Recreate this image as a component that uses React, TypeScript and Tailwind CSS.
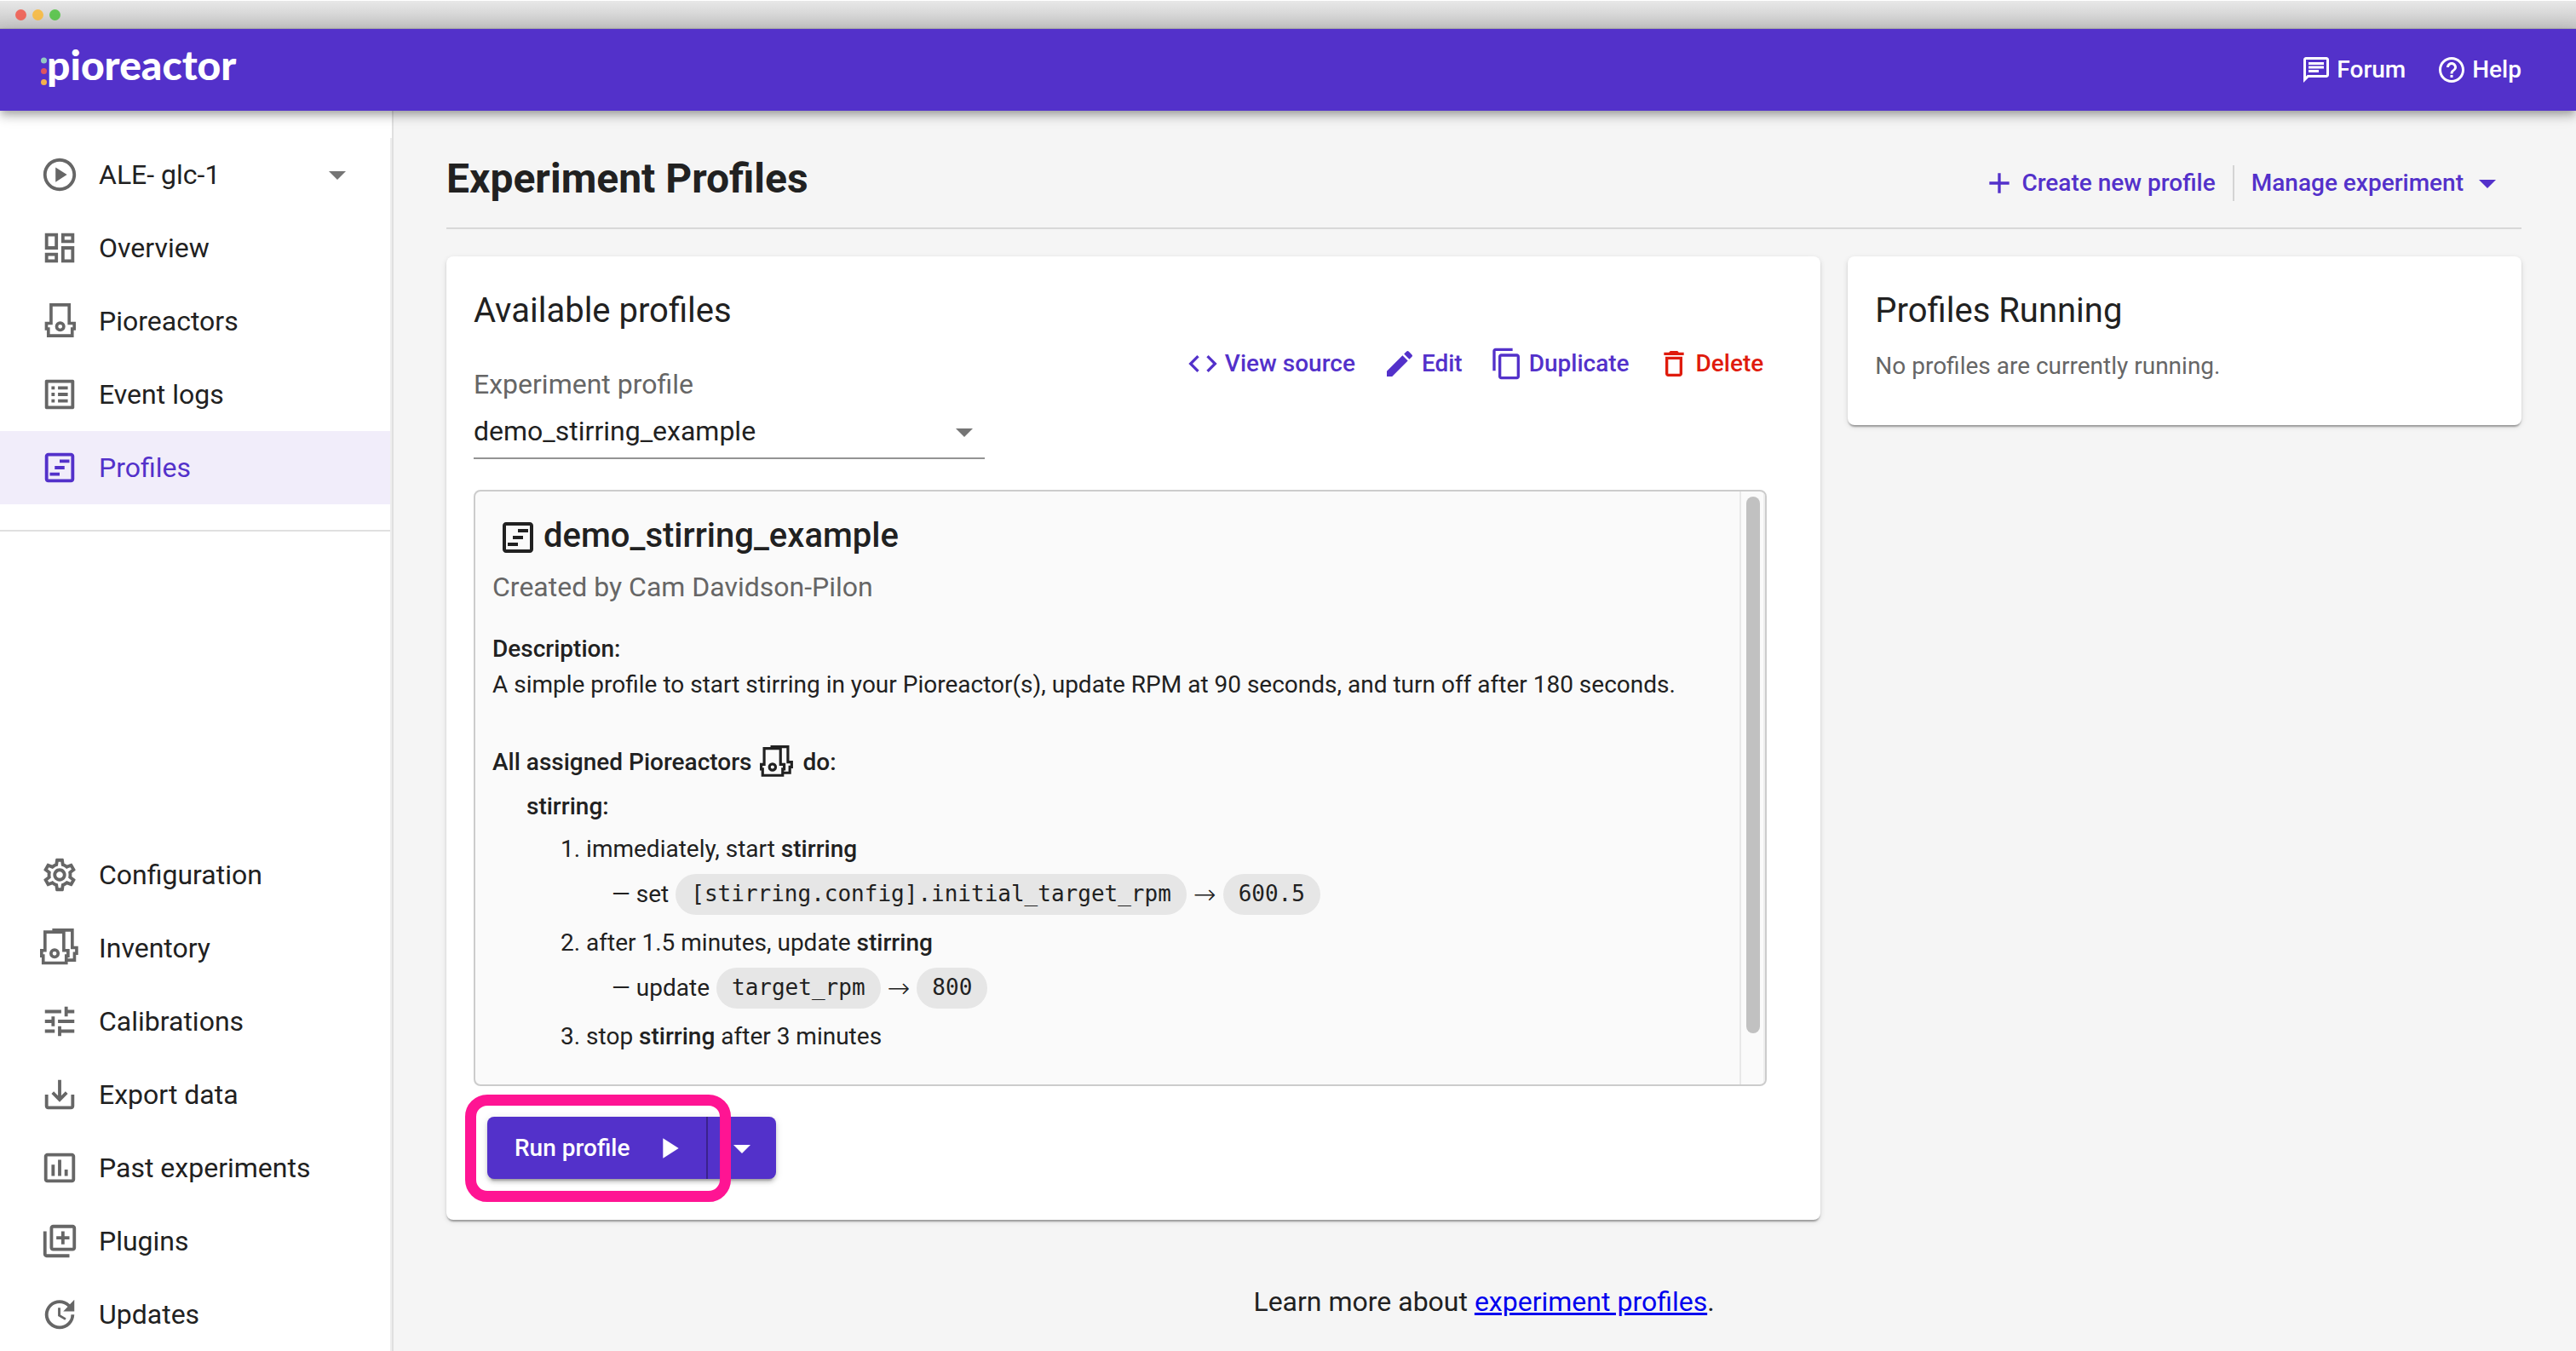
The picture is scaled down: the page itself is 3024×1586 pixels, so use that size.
import { useState } from "react";
import type { ComponentType, ReactNode } from "react";
import {
  MdAdd,
  MdArrowDropDown,
  MdCode,
  MdContentCopy,
  MdDeleteOutline,
  MdEdit,
  MdHelpOutline,
  MdInsertChartOutlined,
  MdOutlineChat,
  MdOutlineDashboard,
  MdOutlineLibraryAdd,
  MdOutlineListAlt,
  MdOutlinePlayCircle,
  MdOutlineSettings,
  MdOutlineViewTimeline,
  MdPlayArrow,
  MdSaveAlt,
  MdTune,
  MdUpdate,
} from "react-icons/md";

type IconType = ComponentType<{ className?: string }>;

function PioreactorIcon({ className }: { className?: string }) {
  return (
    <svg viewBox="0 0 24 24" className={className} fill="none" stroke="currentColor" strokeWidth="1.9" aria-hidden="true">
      <path d="M6.75 2H17.85V13.3H20.95V16.7H19.7V20.95H5.1V16.7H3.9V13.3H6.75Z" />
      <circle cx="12.35" cy="15.3" r="2.2" />
    </svg>
  );
}

function PioreactorsIcon({ className }: { className?: string }) {
  return (
    <svg viewBox="0 0 24 24" className={className} fill="none" stroke="currentColor" strokeWidth="1.9" aria-hidden="true">
      <path d="M3.05 2.15H14.55V13.45H17.15V16.75H16.05V21.15H1.95V16.75H.95V13.45H3.05Z" />
      <circle cx="8.9" cy="15.3" r="2.2" />
      <path d="M7.5 .95H19.75V11.75H22.4V15.25H21.1V19.35H16.3" />
    </svg>
  );
}

function NavItem({ icon: Icon, label, active = false }: { icon: IconType; label: string; active?: boolean }) {
  return (
    <li>
      <a
        href="#"
        aria-current={active ? "page" : undefined}
        className={
          active
            ? "flex h-[86px] items-center gap-[23px] bg-[#f1edfa] pl-[47px] text-[#5331ca]"
            : "flex h-[86px] items-center gap-[23px] pl-[47px]"
        }
      >
        <Icon className={active ? "size-[46px] shrink-0" : "size-[46px] shrink-0 text-[#666666]"} />
        <span>{label}</span>
      </a>
    </li>
  );
}

function Sidebar() {
  return (
    <aside className="flex w-[462px] shrink-0 flex-col border-r-2 border-[#e0e0e0] bg-white pt-8">
      <nav className="flex grow flex-col justify-between border-r-2 border-[#eeeeee]" aria-label="Main">
        <div>
          <button type="button" className="flex h-[86px] w-full items-center gap-[23px] pr-[38px] pl-[47px] text-left">
            <MdOutlinePlayCircle className="size-[46px] shrink-0 text-[#666666]" />
            <span className="grow">ALE- glc-1</span>
            <MdArrowDropDown className="size-12 text-[#757575]" />
          </button>
          <ul className="border-b-2 border-[#e0e0e0] pb-[30px]">
            <NavItem icon={MdOutlineDashboard} label="Overview" />
            <NavItem icon={PioreactorIcon} label="Pioreactors" />
            <NavItem icon={MdOutlineListAlt} label="Event logs" />
            <NavItem icon={MdOutlineViewTimeline} label="Profiles" active />
          </ul>
        </div>
        <ul>
          <NavItem icon={MdOutlineSettings} label="Configuration" />
          <NavItem icon={PioreactorsIcon} label="Inventory" />
          <NavItem icon={MdTune} label="Calibrations" />
          <NavItem icon={MdSaveAlt} label="Export data" />
          <NavItem icon={MdInsertChartOutlined} label="Past experiments" />
          <NavItem icon={MdOutlineLibraryAdd} label="Plugins" />
          <NavItem icon={MdUpdate} label="Updates" />
        </ul>
      </nav>
    </aside>
  );
}

function WindowBar() {
  return (
    <div className="flex h-[34px] items-center gap-[7px] border-t border-b border-t-white border-b-[#b0b0b0] bg-linear-to-b from-[#e8e8e8] to-[#c6c6c6] pl-[18px]">
      <span className="size-[13px] rounded-full bg-[#ee6a5f]" />
      <span className="size-[13px] rounded-full bg-[#f5bd4f]" />
      <span className="size-[13px] rounded-full bg-[#61c554]" />
    </div>
  );
}

function TopBar() {
  return (
    <header className="relative z-10 flex h-24 items-center justify-between bg-[#5331ca] pr-16 pl-12 text-white shadow-[0_4px_8px_-2px_rgba(0,0,0,0.2),0_8px_10px_0_rgba(0,0,0,0.14),0_2px_20px_0_rgba(0,0,0,0.12)]">
      <a href="#" className="flex items-center pb-3" aria-label="pioreactor">
        <svg viewBox="0 0 7 34" className="mt-4 h-[34px] w-[7px]" aria-hidden="true">
          <circle cx="3.5" cy="4" r="3.5" fill="#93cbc3" />
          <circle cx="3.5" cy="16.5" r="3.5" fill="#dd5560" />
          <circle cx="3.5" cy="29.5" r="3.5" fill="#f4b04c" />
        </svg>
        <span className="font-[Lato,sans-serif] text-[48px] leading-[56px] font-black">pioreactor</span>
      </a>
      <div className="flex items-center gap-9 text-[28px] font-medium">
        <a href="#" className="flex items-center gap-1.5">
          <MdOutlineChat className="size-9" />
          Forum
        </a>
        <a href="#" className="flex items-center gap-1.5">
          <MdHelpOutline className="size-9" />
          Help
        </a>
      </div>
    </header>
  );
}

function Card({ children }: { children: ReactNode }) {
  return (
    <section className="rounded-lg bg-white px-8 pt-8 pb-12 shadow-[0_4px_2px_-2px_rgba(0,0,0,0.2),0_2px_2px_0_rgba(0,0,0,0.14),0_2px_6px_0_rgba(0,0,0,0.12)]">
      {children}
    </section>
  );
}

function ActionButton({ icon: Icon, label, danger = false }: { icon: IconType; label: string; danger?: boolean }) {
  return (
    <button type="button" className={danger ? "flex items-center gap-1.5 text-[#df1b0c]" : "flex items-center gap-1.5"}>
      <Icon className="size-10" />
      {label}
    </button>
  );
}

function Pill({ children }: { children: ReactNode }) {
  return (
    <code className="flex h-12 items-center rounded-full bg-[#e6e6e6] px-[18px] pb-0.5 font-['DejaVu_Sans_Mono',monospace] text-[26px]">
      {children}
    </code>
  );
}

function Assignment({ verb, target, value }: { verb: string; target: string; value: string }) {
  return (
    <div className="mt-[5px] flex h-12 items-center gap-2 pl-[60px]">
      <span>— {verb}</span>
      <Pill>{target}</Pill>
      <span className="font-['DejaVu_Sans',sans-serif] text-[32px] leading-8 font-light">→</span>
      <Pill>{value}</Pill>
    </div>
  );
}

function Step({ n, children, detail }: { n: number; children: ReactNode; detail?: ReactNode }) {
  return (
    <li>
      <p className="h-12 leading-[48px]">
        {n}. {children}
      </p>
      {detail}
    </li>
  );
}

function ProfileViewer() {
  return (
    <div className="mt-9 flex h-[700px] w-[98%] overflow-hidden rounded-lg border-2 border-[#cccccc] bg-[#fafafa] text-[28px]">
      <article className="grow pt-5 pl-5">
        <h3 className="flex h-16 items-center gap-1.5 pl-1.5 text-[40px] font-medium">
          <MdOutlineViewTimeline className="mt-1 size-12" />
          demo_stirring_example
        </h3>
        <p className="mt-1 text-[32px] leading-[48px] text-[#666666]">Created by Cam Davidson-Pilon</p>
        <div className="mt-7 leading-[42px]">
          <h4 className="font-medium">Description:</h4>
          <p>
            A simple profile to start stirring in your Pioreactor(s), update RPM at 90 seconds, and turn off after 180
            seconds.
          </p>
        </div>
        <h4 className="mt-11 flex h-[52px] items-center gap-2.5 font-medium">
          All assigned Pioreactors
          <PioreactorsIcon className="size-10" />
          do:
        </h4>
        <h5 className="h-[52px] pl-10 leading-[52px] font-medium">stirring:</h5>
        <ol className="flex flex-col gap-[9px] pl-20">
          <Step
            n={1}
            detail={<Assignment verb="set" target="[stirring.config].initial_target_rpm" value="600.5" />}
          >
            immediately, start <b className="font-medium">stirring</b>
          </Step>
          <Step n={2} detail={<Assignment verb="update" target="target_rpm" value="800" />}>
            after 1.5 minutes, update <b className="font-medium">stirring</b>
          </Step>
          <Step n={3}>
            stop <b className="font-medium">stirring</b> after 3 minutes
          </Step>
        </ol>
      </article>
      <div className="w-[30px] shrink-0 border-x-2 border-l-[#e8e8e8] border-r-[#eeeeee] px-1.5 pt-1.5" aria-hidden="true">
        <div className="h-[630px] w-4 rounded-full bg-[#c1c1c1]" />
      </div>
    </div>
  );
}

function AvailableProfiles() {
  const [profile, setProfile] = useState("demo_stirring_example");
  return (
    <Card>
      <h2 className="text-[40px] leading-[64px]">Available profiles</h2>
      <div className="flex w-[98%] items-start justify-between">
        <div className="w-[600px] pt-[30px]">
          <label htmlFor="profile" className="block leading-[48px] text-[#666666]">
            Experiment profile
          </label>
          <div className="relative">
            <select
              id="profile"
              value={profile}
              onChange={(e) => setProfile(e.target.value)}
              className="block h-16 w-full appearance-none border-b-2 border-[#949494] bg-transparent outline-none"
            >
              <option value="demo_stirring_example">demo_stirring_example</option>
            </select>
            <MdArrowDropDown className="pointer-events-none absolute top-2 right-0 size-12 text-[#757575]" />
          </div>
        </div>
        <div className="flex items-center gap-8 pt-2.5 pr-1 text-[28px] leading-10 font-medium text-[#5331ca]">
          <ActionButton icon={MdCode} label="View source" />
          <ActionButton icon={MdEdit} label="Edit" />
          <ActionButton icon={MdContentCopy} label="Duplicate" />
          <ActionButton icon={MdDeleteOutline} label="Delete" danger />
        </div>
      </div>
      <ProfileViewer />
      <div className="relative mt-9 ml-4 flex w-fit">
        <div className="flex rounded-lg bg-[#5331ca] text-[28px] font-medium text-white shadow-[0_6px_2px_-4px_rgba(0,0,0,0.2),0_4px_4px_0_rgba(0,0,0,0.14),0_2px_10px_0_rgba(0,0,0,0.12)]">
          <button type="button" className="flex h-[73px] w-[259px] items-center justify-between border-r-2 border-[#3a228d] pr-6 pl-8">
            Run profile
            <MdPlayArrow className="size-10" />
          </button>
          <button type="button" aria-label="More run options" className="flex w-20 items-center justify-center">
            <MdArrowDropDown className="size-12" />
          </button>
        </div>
        <div className="pointer-events-none absolute -top-[26px] -left-[26px] h-[126px] w-[312px] rounded-[26px] border-[13px] border-[#ff1493]" />
      </div>
    </Card>
  );
}

export default function App() {
  return (
    <div className="flex min-h-screen flex-col bg-[#f5f5f5] font-[Roboto,sans-serif] text-[32px] text-[#212121]">
      <WindowBar />
      <TopBar />
      <div className="flex grow">
        <Sidebar />
        <main className="grow pt-12 pr-16 pl-[62px]">
          <div className="flex items-end justify-between border-b-2 border-[#d8d8d8] pb-[25px]">
            <h1 className="text-[48px] leading-[64px] font-bold">Experiment Profiles</h1>
            <div className="flex h-[54px] items-center pr-4 text-[28px] font-medium text-[#5331ca]">
              <button type="button" className="flex items-center gap-1.5">
                <MdAdd className="size-10" />
                Create new profile
              </button>
              <span className="mx-5 h-[42px] w-0.5 bg-[#d4d4d4]" />
              <button type="button" className="flex items-center gap-1">
                Manage experiment
                <MdArrowDropDown className="size-12" />
              </button>
            </div>
          </div>
          <div className="mt-8 grid grid-cols-3 items-start gap-8">
            <div className="col-span-2">
              <AvailableProfiles />
            </div>
            <Card>
              <h2 className="text-[40px] leading-[64px]">Profiles Running</h2>
              <p className="mt-3 text-[28px] leading-[42px] text-[#666666]">No profiles are currently running.</p>
            </Card>
          </div>
          <p className="mt-[72px] text-center leading-[48px]">
            Learn more about{" "}
            <a href="#" className="text-[#0000ee] underline">
              experiment profiles
            </a>
            .
          </p>
        </main>
      </div>
    </div>
  );
}
